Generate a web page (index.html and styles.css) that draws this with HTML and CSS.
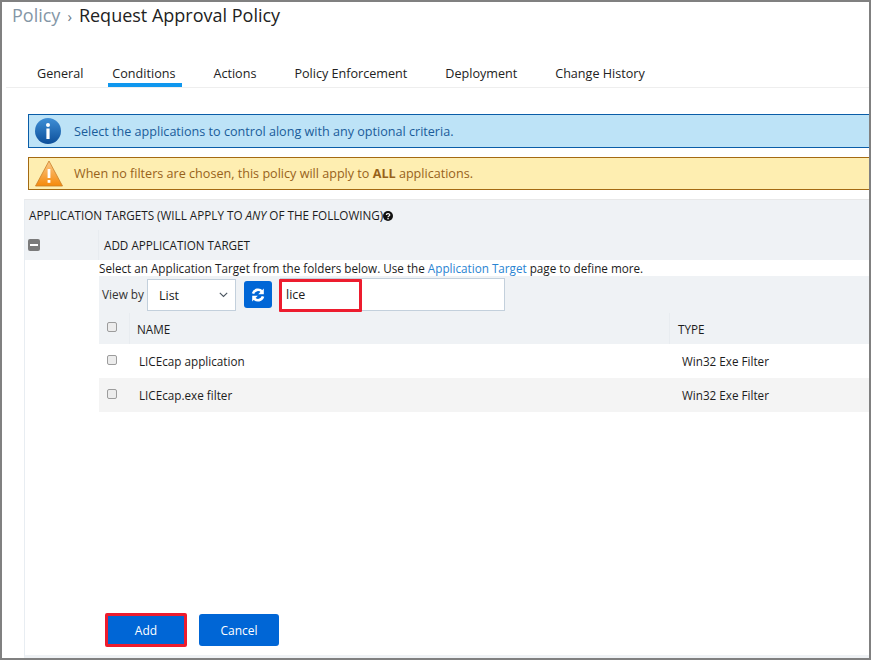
FILE: index.html
```html
<!DOCTYPE html>
<html lang="en">
<head>
<meta charset="UTF-8">
<meta name="viewport" content="width=device-width, initial-scale=1.0">
<title>Request Approval Policy</title>
<link rel="stylesheet" href="styles.css">
</head>
<body>

<div class="frame">
    <h1 class="crumb"><span class="crumb-root">Policy</span><span class="crumb-sep">›</span>Request Approval Policy</h1>

    <div class="tabs">
        <a class="tab">General</a>
        <a class="tab active">Conditions</a>
        <a class="tab">Actions</a>
        <a class="tab">Policy Enforcement</a>
        <a class="tab">Deployment</a>
        <a class="tab">Change History</a>
    </div>

    <div class="notice notice-info">
        <svg class="notice-icon" width="26" height="26" viewBox="0 0 26 26">
            <defs>
                <linearGradient id="infoFill" x1="0" y1="0" x2="0" y2="1">
                    <stop offset="0" stop-color="#3f8fd6"/>
                    <stop offset="1" stop-color="#0d4f9a"/>
                </linearGradient>
            </defs>
            <circle cx="13" cy="13" r="13" fill="url(#infoFill)"/>
            <circle cx="13" cy="7" r="2" fill="#fff"/>
            <rect x="11.4" y="10.5" width="3.2" height="10.5" fill="#fff"/>
        </svg>
        <span>Select the applications to control along with any optional criteria.</span>
    </div>

    <div class="notice notice-warn">
        <svg class="notice-icon" width="28" height="27" viewBox="0 0 28 27">
            <defs>
                <linearGradient id="warnFill" x1="0" y1="0" x2="0" y2="1">
                    <stop offset="0" stop-color="#fbc98a"/>
                    <stop offset="1" stop-color="#f58a0b"/>
                </linearGradient>
            </defs>
            <path d="M14 1 L27.5 26 H0.5 Z" fill="url(#warnFill)" stroke="#c9802a" stroke-width="0.8"/>
            <rect x="12.6" y="9" width="2.8" height="9" fill="#fff"/>
            <rect x="12.6" y="20" width="2.8" height="2.8" fill="#fff"/>
        </svg>
        <span>When no filters are chosen, this policy will apply to <b>ALL</b> applications.</span>
    </div>

    <div class="section">
        <div class="section-title">APPLICATION TARGETS (WILL APPLY TO <i>ANY</i> OF THE FOLLOWING)<svg class="help" width="10" height="10" viewBox="0 0 10 10"><circle cx="5" cy="5" r="5" fill="#111"/><path d="M3.3 4 C3.3 2.2 6.8 2.2 6.8 4 C6.8 5.1 5 5 5 6.2" fill="none" stroke="#fff" stroke-width="1.2"/><rect x="4.4" y="7" width="1.3" height="1.3" fill="#fff"/></svg></div>

        <div class="section-row">
            <div class="collapse-col"><span class="collapse-btn"></span></div>
            <div class="section-label">ADD APPLICATION TARGET</div>
        </div>

        <div class="picker">
            <p class="picker-help">Select an Application Target from the folders below. Use the <a>Application Target</a> page to define more.</p>

            <div class="toolbar">
                <span class="view-label">View by</span>
                <div class="select">
                    <span>List</span>
                    <svg width="9" height="6" viewBox="0 0 9 6"><path d="M0.8 0.8 L4.5 4.5 L8.2 0.8" fill="none" stroke="#4a5560" stroke-width="1.1"/></svg>
                </div>
                <button class="refresh">
                    <svg width="14" height="14" viewBox="0 0 14 14"><path d="M2 5.6 A5.2 5.2 0 0 1 11 3.6" fill="none" stroke="#fff" stroke-width="2.6"/><path d="M12.8 0.6 V6.2 H7.2 Z" fill="#fff"/><path d="M12 8.4 A5.2 5.2 0 0 1 3 10.4" fill="none" stroke="#fff" stroke-width="2.6"/><path d="M1.2 13.4 V7.8 H6.8 Z" fill="#fff"/></svg>
                </button>
                <div class="search">
                    <span class="search-text">lice</span>
                    <span class="callout"></span>
                </div>
            </div>

            <div class="grid grid-head">
                <div class="cell-check"><span class="check"></span></div>
                <div class="cell-name">NAME</div>
                <div class="cell-type">TYPE</div>
            </div>
            <div class="grid grid-row">
                <div class="cell-check"><span class="check"></span></div>
                <div class="cell-name">LICEcap application</div>
                <div class="cell-type">Win32 Exe Filter</div>
            </div>
            <div class="grid grid-row odd">
                <div class="cell-check"><span class="check"></span></div>
                <div class="cell-name">LICEcap.exe filter</div>
                <div class="cell-type">Win32 Exe Filter</div>
            </div>
        </div>

        <div class="actions">
            <button class="btn btn-add">Add</button>
            <button class="btn btn-cancel">Cancel</button>
        </div>
    </div>
</div>

</body>
</html>
```
FILE: styles.css
```css
html, body {
    margin: 0;
    padding: 0;
}

body {
    font-family: "Open Sans", Arial, sans-serif;
    font-size: 12px;
    color: #1c1c1c;
    background-color: #fff;
}

.frame {
    box-sizing: border-box;
    width: 871px;
    height: 660px;
    border: 2px solid #808080;
    overflow: hidden;
}

.crumb {
    margin: 0;
    padding-left: 10px;
    height: 26px;
    font-size: 18px;
    font-weight: 400;
    line-height: 26px;
    color: #222;
    white-space: nowrap;
}

.crumb-root {
    color: #8496a6;
}

.crumb-sep {
    margin: 0 7px 0 7px;
    color: #6b7a88;
    font-size: 15px;
}

.tabs {
    display: flex;
    margin: 31px 0 0 4px;
    height: 28px;
    padding-left: 31px;
    border-bottom: 1px solid #eee;
}

.tab {
    box-sizing: border-box;
    height: 28px;
    margin-right: 38px;
    padding-top: 6px;
    font-size: 12.6px;
    line-height: 17px;
    color: #222;
    white-space: nowrap;
}

.tab.active {
    margin: 0 31px 0 -13px;
    padding: 6px 7px 0 4px;
    border-bottom: 4px solid #0f97ee;
}

.notice {
    box-sizing: border-box;
    display: flex;
    align-items: center;
    height: 34px;
    margin-left: 26px;
    padding-left: 6px;
    border: solid 1px;
    border-right: 0;
    font-size: 12.6px;
}

.notice-icon {
    flex: none;
    margin-right: 13px;
}

.notice-info {
    margin-top: 26px;
    background-color: #bde3f7;
    border-color: #0a5da8;
    color: #1a5c9a;
}

.notice-warn {
    margin-top: 9px;
    height: 33px;
    background-color: #feeeb1;
    border-color: #a46a12;
    color: #98621a;
}

.notice-warn .notice-icon {
    margin-right: 11px;
}

.section {
    margin: 9px 0 0 22px;
    height: 455px;
    border-top: 1px solid #e8e8e8;
    border-left: 1px solid #e8edf2;
    border-bottom: 3px solid #eff2f5;
}

.section-title {
    height: 30px;
    padding: 7px 0 0 4px;
    box-sizing: border-box;
    background-color: #eff2f5;
    font-size: 11.7px;
    line-height: 16px;
    white-space: nowrap;
}

.help {
    vertical-align: -1px;
}

.section-row {
    display: flex;
    height: 30px;
    background-color: #eff2f5;
}

.collapse-col {
    width: 74px;
    display: flex;
    align-items: center;
    padding-left: 3px;
    box-sizing: border-box;
    border-right: 1px solid #e8ecf0;
}

.collapse-btn {
    display: flex;
    align-items: center;
    justify-content: center;
    width: 12px;
    height: 12px;
    border-radius: 2px;
    background-color: #7b7b7b;
}

.collapse-btn::before {
    content: "";
    width: 8px;
    height: 2px;
    background-color: #fff;
}

.section-label {
    padding-left: 5px;
    font-size: 11.7px;
    line-height: 30px;
}

.picker {
    margin-left: 74px;
}

.picker-help {
    margin: 0;
    height: 16px;
    font-size: 11.7px;
    line-height: 17px;
    white-space: nowrap;
}

.picker-help a {
    color: #2a84d2;
}

.toolbar {
    display: flex;
    align-items: flex-start;
    height: 37px;
    padding-top: 2px;
    box-sizing: border-box;
    background-color: #eff2f5;
}

.view-label {
    margin: 8px 3px 0 3px;
    font-size: 11.8px;
    line-height: 17px;
    color: #333;
}

.select {
    box-sizing: border-box;
    display: flex;
    align-items: center;
    justify-content: space-between;
    width: 89px;
    height: 32px;
    margin-top: 1px;
    padding: 0 7px 0 11px;
    background-color: #fff;
    border: 1px solid #c3d0dc;
    font-size: 12.5px;
}

.refresh {
    display: flex;
    align-items: center;
    justify-content: center;
    width: 28px;
    height: 27px;
    margin: 3px 8px 0 8px;
    padding: 0;
    border: 0;
    border-radius: 3px;
    background-color: #0066d6;
}

.search {
    position: relative;
    box-sizing: border-box;
    width: 225px;
    height: 33px;
    padding-left: 5px;
    background-color: #fff;
    border: 1px solid #c3d0dc;
    font-size: 12.5px;
    line-height: 31px;
}

.callout {
    position: absolute;
    left: -2px;
    top: 0;
    box-sizing: border-box;
    width: 83px;
    height: 33px;
    border: 3px solid #ed1c2e;
    border-radius: 1px;
}

.grid {
    display: flex;
    align-items: center;
}

.grid-head {
    height: 31px;
    background-color: #eff2f5;
    font-size: 11.7px;
}

.grid-row {
    height: 34px;
    font-size: 11.7px;
}

.grid-row.odd {
    background-color: #f4f4f4;
}

.cell-check {
    display: flex;
    justify-content: center;
    width: 30px;
    flex: none;
}

.grid-head .cell-check,
.grid-head .cell-type {
    align-self: stretch;
    align-items: center;
    border-right: 1px solid #e8ecf0;
    display: flex;
}

.grid-head .cell-type {
    border-right: 0;
    border-left: 1px solid #e8ecf0;
}

.check {
    box-sizing: border-box;
    display: block;
    width: 10px;
    height: 10px;
    margin-top: -3px;
    margin-right: 4px;
    border: 1px solid #9c9c9c;
    border-radius: 2px;
    background-color: #ececec;
}

.cell-name {
    flex: none;
    width: 539px;
    padding-left: 10px;
    box-sizing: border-box;
}

.grid-head .cell-name {
    padding-left: 7px;
}

.cell-type {
    padding-left: 14px;
    white-space: nowrap;
}

.grid-head .cell-type {
    padding-left: 8px;
}

.actions {
    display: flex;
    align-items: flex-start;
    margin: 201px 0 0 80px;
}

.btn {
    box-sizing: border-box;
    height: 32px;
    padding: 0;
    border: 0;
    border-radius: 3px;
    background-color: #0066d6;
    color: #fff;
    font-family: inherit;
    font-size: 12px;
}

.btn-add {
    width: 82px;
    height: 34px;
    margin-right: 12px;
    border: 3px solid #ed1c2e;
    border-radius: 2px;
}

.btn-cancel {
    width: 80px;
    margin-top: 1px;
}
```
